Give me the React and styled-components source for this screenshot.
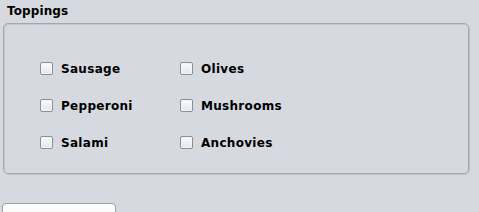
import React from "react";
import styled, { createGlobalStyle } from "styled-components";

const Global = createGlobalStyle`
  html, body {
    margin: 0;
    padding: 0;
    background: #d6d9df;
    font-family: "DejaVu Sans", Tahoma, sans-serif;
  }
`;

const Page = styled.div`
  width: 479px;
  height: 212px;
  overflow: hidden;
  display: flex;
  flex-direction: column;
  & > * {
    flex: none;
  }
`;

const Title = styled.div`
  font-size: 12px;
  font-weight: bold;
  line-height: 14px;
  color: #000;
  padding: 4px 0 0 7px;
  height: 19px;
  box-sizing: border-box;
  letter-spacing: 0.1px;
`;

const Panel = styled.div`
  margin: 4px 0 0 3px;
  width: 466px;
  height: 151px;
  box-sizing: border-box;
  border: 1px solid #a3a7ad;
  border-radius: 5px;
  box-shadow: 1px 1px 0 #bfc3c9, inset 1px 1px 0 #c4c8ce;
  display: grid;
  grid-template-columns: 140px 140px;
  grid-auto-rows: 37px;
  align-content: start;
  padding: 30px 0 0 36px;
`;

const Option = styled.label`
  display: flex;
  align-items: center;
  gap: 8px;
  height: 29px;
  font-size: 12px;
  font-weight: bold;
  letter-spacing: 0.3px;
  color: #000;
`;

const Box = styled.span`
  width: 13px;
  height: 13px;
  box-sizing: border-box;
  border: 1px solid #8b9097;
  border-radius: 2px;
  background: linear-gradient(#fbfbfc, #e3e6ea);
  box-shadow: inset 0 0 0 1px #f4f5f7;
  flex: none;
`;

const Button = styled.div`
  margin: 29px 0 0 2px;
  width: 114px;
  height: 30px;
  box-sizing: border-box;
  border: 1px solid #9ea2a8;
  border-radius: 4px;
  background: linear-gradient(#fdfdfd, #f3f4f6);
`;

const items = [
  ["Sausage", "Olives"],
  ["Pepperoni", "Mushrooms"],
  ["Salami", "Anchovies"],
];

export default function App() {
  return (
    <Page>
      <Global />
      <Title>Toppings</Title>
      <Panel>
        {items.flat().map((name) => (
          <Option key={name}>
            <Box />
            {name}
          </Option>
        ))}
      </Panel>
      <Button />
    </Page>
  );
}
